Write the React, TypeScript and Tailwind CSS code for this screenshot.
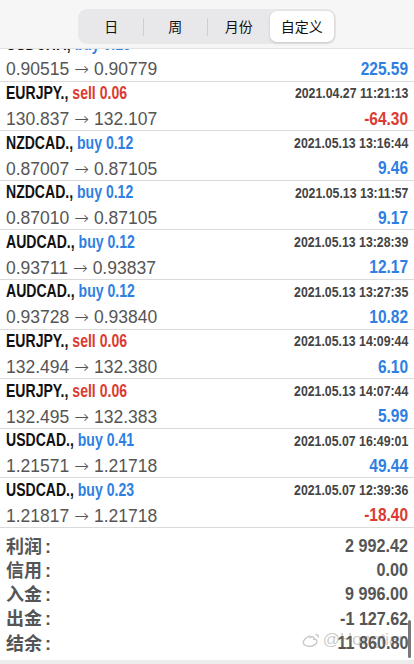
import React from "react";

type Deal = {
  sym: string;
  side: "buy" | "sell";
  lot: string;
  time: string;
  open: string;
  close: string;
  profit: string;
};

const deals: Deal[] = [
  { sym: "USDCHF.", side: "buy", lot: "0.15", time: "2021.04.27 10:02:51", open: "0.90515", close: "0.90779", profit: "225.59" },
  { sym: "EURJPY.", side: "sell", lot: "0.06", time: "2021.04.27 11:21:13", open: "130.837", close: "132.107", profit: "-64.30" },
  { sym: "NZDCAD.", side: "buy", lot: "0.12", time: "2021.05.13 13:16:44", open: "0.87007", close: "0.87105", profit: "9.46" },
  { sym: "NZDCAD.", side: "buy", lot: "0.12", time: "2021.05.13 13:11:57", open: "0.87010", close: "0.87105", profit: "9.17" },
  { sym: "AUDCAD.", side: "buy", lot: "0.12", time: "2021.05.13 13:28:39", open: "0.93711", close: "0.93837", profit: "12.17" },
  { sym: "AUDCAD.", side: "buy", lot: "0.12", time: "2021.05.13 13:27:35", open: "0.93728", close: "0.93840", profit: "10.82" },
  { sym: "EURJPY.", side: "sell", lot: "0.06", time: "2021.05.13 14:09:44", open: "132.494", close: "132.380", profit: "6.10" },
  { sym: "EURJPY.", side: "sell", lot: "0.06", time: "2021.05.13 14:07:44", open: "132.495", close: "132.383", profit: "5.99" },
  { sym: "USDCAD.", side: "buy", lot: "0.41", time: "2021.05.07 16:49:01", open: "1.21571", close: "1.21718", profit: "49.44" },
  { sym: "USDCAD.", side: "buy", lot: "0.23", time: "2021.05.07 12:39:36", open: "1.21817", close: "1.21718", profit: "-18.40" },
];

const totals = [
  ["利润", "2 992.42"],
  ["信用", "0.00"],
  ["入金", "9 996.00"],
  ["出金", "-1 127.62"],
  ["结余", "11 860.80"],
];

// condensed bold look: Liberation Sans bold squeezed horizontally
const bold = "font-['Liberation_Sans',sans-serif] font-bold inline-block whitespace-nowrap";

function Segments() {
  const items = ["日", "周", "月份", "自定义"];
  return (
    <div className="flex w-[258px] h-[35px] rounded-[9px] bg-[#e8e8ea] p-[2px]">
      {items.map((t, i) => (
        <div key={t} className="flex flex-1 items-center">
          {i > 0 && i < 3 && <span className="w-px h-[18px] bg-[#cfcfd2]" />}
          <div
            className={
              "flex-1 h-full flex items-center justify-center text-[14px] text-[#111] font-['Noto_Sans_CJK_SC',sans-serif] " +
              (i === 3 ? "bg-white rounded-[7px] shadow-[0_1px_3px_rgba(0,0,0,0.15)]" : "")
            }
          >
            {t}
          </div>
        </div>
      ))}
    </div>
  );
}

function Row({ d }: { d: Deal }) {
  const sideColor = d.side === "buy" ? "text-[#2f7fe2]" : "text-[#db3b31]";
  const profitColor = d.profit.startsWith("-") ? "text-[#db3b31]" : "text-[#2f7fe2]";
  return (
    <div className="h-[49.6px] flex flex-col border-b border-[#dadada] px-[6px]">
      <div className="h-[24px] flex items-center justify-between">
        <span className={`${bold} text-[18px] text-[#111] scale-x-[0.78] origin-left`}>
          {d.sym}, <span className={sideColor}>{d.side} {d.lot}</span>
        </span>
        <span className={`${bold} text-[15px] text-[#444] scale-x-[0.82] origin-right`}>{d.time}</span>
      </div>
      <div className="flex-1 flex items-center justify-between">
        <span className="font-['Liberation_Sans',sans-serif] text-[17.5px] text-[#555] whitespace-nowrap">
          {d.open}
          <span className="font-['DejaVu_Sans',sans-serif] font-light mx-[5px]">→</span>
          {d.close}
        </span>
        <span className={`${bold} text-[18px] scale-x-[0.86] origin-right ${profitColor}`}>{d.profit}</span>
      </div>
    </div>
  );
}

export default function App() {
  return (
    <div className="relative w-[414px] h-[664px] overflow-hidden bg-white flex flex-col">
      <div className="relative z-10 h-[49px] shrink-0 bg-[#f6f6f6] border-b border-[#e3e3e3] flex items-start justify-center pt-[9px]">
        <div className="ml-[-1px]">
          <Segments />
        </div>
      </div>

      <div className="flex-1 overflow-hidden flex flex-col">
        <div className="-mt-[17px]">
          {deals.map((d, i) => (
            <Row key={i} d={d} />
          ))}
        </div>

        <div className="flex-1 pt-[6px] px-[6px]">
          {totals.map(([k, v]) => (
            <div key={k} className="h-[24.3px] flex items-center justify-between text-[#555]">
              <span className="font-['Noto_Sans_CJK_SC',sans-serif] font-bold text-[18px]">
                {k}
                <span className="font-['Liberation_Sans',sans-serif] ml-[3px]">:</span>
              </span>
              <span className={`${bold} text-[19px] scale-x-[0.85] origin-right`}>{v}</span>
            </div>
          ))}
        </div>
        <div className="h-[4px] shrink-0 bg-[#ececec]" />
      </div>

      {/* watermark */}
      <div className="absolute right-[6px] top-[627px] flex items-center gap-[2px] text-[rgba(120,120,120,0.4)] font-['Liberation_Sans',sans-serif] text-[17px]">
        <svg width="20" height="16" viewBox="0 0 20 16" fill="none" stroke="currentColor" strokeWidth="1.4">
          <path d="M8.5 4.2C5 5.4 2 8.3 2.3 10.8c.3 2.6 3.9 3.9 7.4 3.4 3.9-.5 6.6-2.7 6.2-5-.3-1.6-2-2-3.2-1.8.6-1.5.3-2.6-1.2-2.6-.6 0-1.5.3-2.2.7.3-1-.2-1.6-.8-1.3z" />
          <path d="M14.5 2.2c1.8.2 3 1.5 2.9 3.3" />
        </svg>
        <span>@Hongtian</span>
      </div>

      {/* scroll indicator */}
      <div className="absolute right-[3px] top-[620px] w-[3px] h-[38px] rounded-full bg-[#7a7a7a]" />
    </div>
  );
}
